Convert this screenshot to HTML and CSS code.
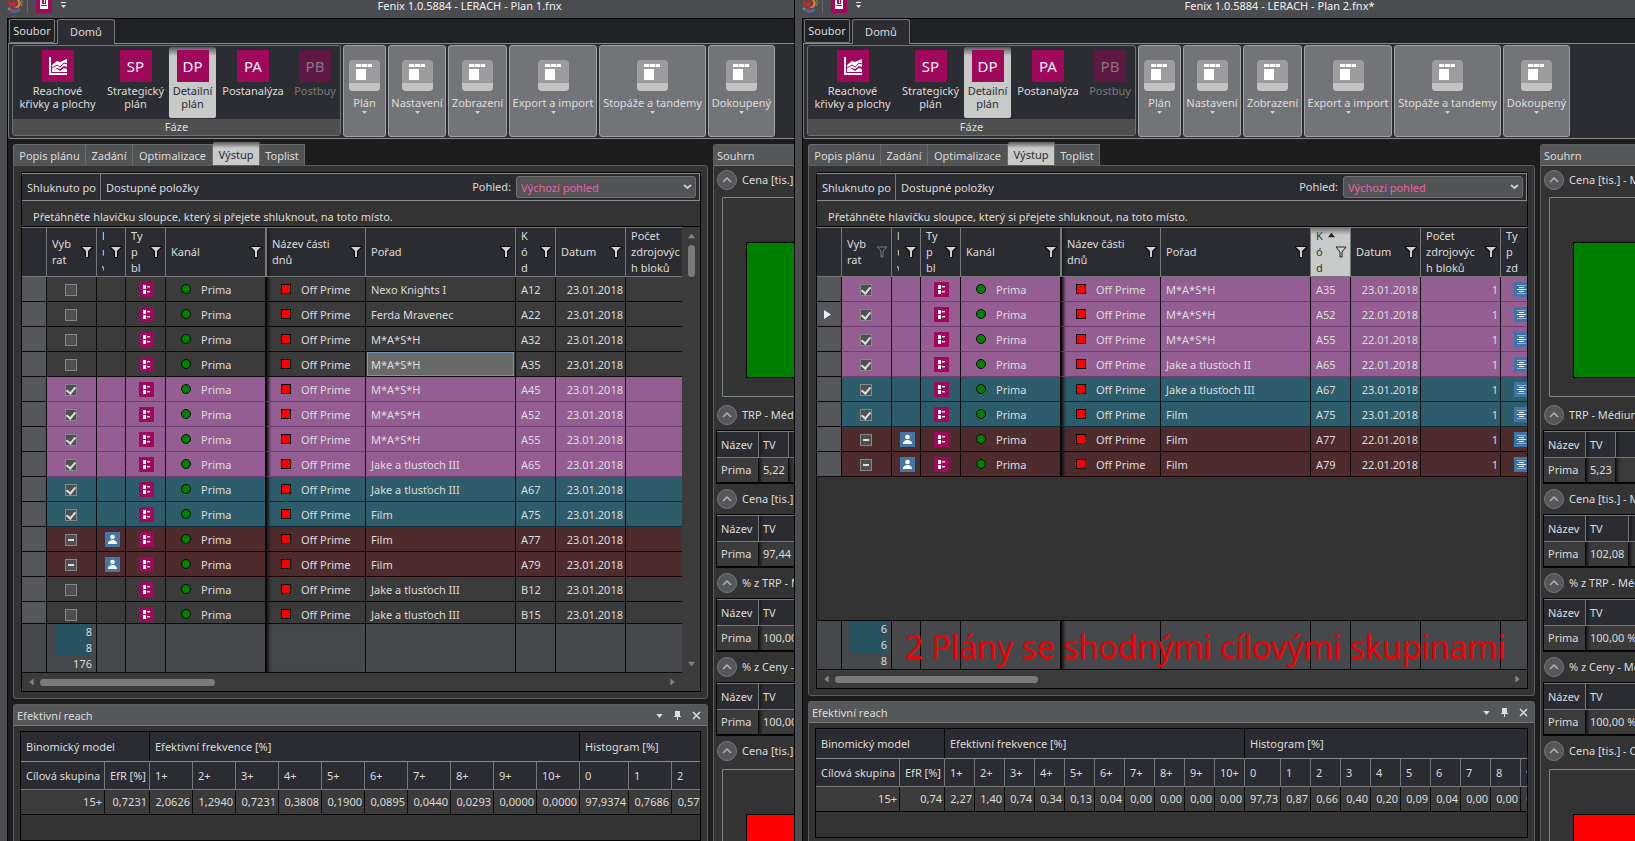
FILE: index.html
```html
<!DOCTYPE html>
<html lang="cs">
<head>
<meta charset="utf-8">
<title>Fenix 1.0.5884 - LERACH</title>
<link rel="stylesheet" href="styles.css">
</head>
<body>
<svg class="defs" aria-hidden="true">
  <symbol id="i-logo" viewBox="0 0 16 16">
    <path d="M1 2 5 7 6 3 9 6 7 10 2 8Z" fill="#d8232a"/>
    <path d="M9 1c4 1 6 5 4 8-1 2-4 3-6 1 3 0 5-2 4-5z" fill="#e8772a"/>
    <path d="M2 8c1 4 7 6 11 2-1 4-5 6-9 4C2 13 1 11 2 8z" fill="#a6403a"/>
    <path d="M4 14c3 2 7 1 9-2" fill="none" stroke="#2e6fc0" stroke-width="2"/>
    <path d="M1 11l2 2" stroke="#2fa0c8" stroke-width="2"/>
    <path d="M13 1c2 2 3 5 1 8" fill="none" stroke="#8a8f4a" stroke-width="1"/>
  </symbol>
  <symbol id="i-save" viewBox="0 0 16 16">
    <rect width="16" height="16" fill="#a0085c"/>
    <path d="M4 3h8v9H4z" fill="#fff"/><path d="M6 3h4v4H6z" fill="#a0085c"/><path d="M8 3h1v3H8z" fill="#fff"/><path d="M5 8h6v1H5z" fill="#a0085c"/>
  </symbol>
  <symbol id="i-more" viewBox="0 0 7 11"><path d="M1 0h5v1H1zM1 3h5L3.500 6z" fill="#e4e4e4"/></symbol>
  <symbol id="i-reach" viewBox="0 0 32 32">
    <path d="M7 7h2v16h16v2H7z" fill="#fff"/>
    <path d="M10 15l5-4 3 1 7-3v8l-3-1-4 3-3-1-5 3z" fill="#fff"/>
    <path d="M10 18l5-3 3 2 4-4 3 1" fill="none" stroke="#a0085c" stroke-width="1"/>
    <path d="M10 20l5-1 3 2 4-3 3 1v3H10z" fill="#fff"/>
  </symbol>
  <symbol id="i-group" viewBox="0 0 31 31">
    <rect width="31" height="31" rx="4" fill="#9c9c9e"/>
    <path d="M0 23h31v4a4 4 0 0 1-4 4H4a4 4 0 0 1-4-4z" fill="#c3c3c1"/>
    <path d="M7 4h16v3H7zM7 9h10v11H7z" fill="#fff"/>
    <path d="M12 4h1v3h-1zM18 4h1v3h-1z" fill="#c6c6c6"/>
  </symbol>
  <symbol id="i-funnel" viewBox="0 0 12 12">
    <path d="M0 0h12v2L8 6v6H4V6L0 2z" fill="#0c0c0c"/><path d="M1 1h10L7 5v6H5V5z" fill="#d2d2d2"/>
  </symbol>
  <symbol id="i-funnel-off" viewBox="0 0 12 12"><path d="M1 1h10L7 5v6H5V5z" fill="none" stroke="#77787a"/></symbol>
  <symbol id="i-funnel-dark" viewBox="0 0 12 12"><path d="M1 1h10L7 6v5H5V6z" fill="#d0d2d1" stroke="#222"/></symbol>
  <symbol id="i-block" viewBox="0 0 15 15">
    <rect width="15" height="15" fill="#a0085c"/>
    <path d="M4 3h3v4H4zM4 8h3v4H4zM8 4h3v1H8zM8 9h3v1H8z" fill="#fff"/>
    <path d="M8 5h3v1H8zM8 10h3v1H8z" fill="#fff" opacity=".35"/>
  </symbol>
  <symbol id="i-person" viewBox="0 0 15 15">
    <rect width="15" height="15" fill="#4676a8"/>
    <circle cx="7.500" cy="5" r="2.300" fill="#fff"/><path d="M3 12c0-3 2-3 3-4h3c1 1 3 1 3 4z" fill="#fff"/>
  </symbol>
  <symbol id="i-lines" viewBox="0 0 15 15">
    <rect width="15" height="15" fill="#3f74a8"/>
    <path d="M3 3h9v1H3zM3 11h9v1H3z" fill="#8fb4d4"/>
    <path d="M5 5h5v1H5zM3 7h9v1H3zM5 9h5v1H5z" fill="#f2f6fa"/>
  </symbol>
  <symbol id="i-row" viewBox="0 0 7 9"><path d="M0 0l7 4.500L0 9z" fill="#e4eefa"/></symbol>
  <symbol id="i-up" viewBox="0 0 20 20">
    <circle cx="10" cy="10" r="9.500" fill="#56575a" stroke="#77787a"/>
    <path d="M6 12l4-4 4 4" fill="none" stroke="#b4b4b4" stroke-width="1.500"/>
  </symbol>
  <symbol id="i-down" viewBox="0 0 8 5"><path d="M0 0h8L4 5z" fill="currentColor"/></symbol>
  <symbol id="i-pin" viewBox="0 0 9 10"><path d="M2 0h5v5h1v1H1V5h1zM4 6h1v3H4z" fill="currentColor"/></symbol>
  <symbol id="i-close" viewBox="0 0 9 9"><path d="M1 1l7 7M8 1L1 8" stroke="currentColor" stroke-width="1.500"/></symbol>
</svg>
<main class="desk" id="desk"></main>
<script src="app.js"></script>
</body>
</html>
```

FILE: styles.css
```css
* { box-sizing: border-box; }

html, body { height: 100%; margin: 0; }

body {
  background: #1d1d1d;
  color: #dcdcdc;
  font: 11px/16px "Noto Sans", "Open Sans", sans-serif;
  overflow: hidden;
}

button, select, input { font: inherit; color: inherit; margin: 0; padding: 0; }
button { background: none; border: 0; }
table { border-collapse: separate; border-spacing: 0; table-layout: fixed; }
th { font-weight: normal; text-align: left; }
svg { display: block; flex: none; }
h1, h2 { margin: 0; font: inherit; }

.defs { position: absolute; width: 0; height: 0; }

.desk { display: grid; grid-template-columns: 795fr 840fr; height: 100vh; }

/* Window frame */
.window {
  display: flex;
  flex-direction: column;
  min-width: 0;
  overflow: hidden;
  background: #4b4c50;
  border-right: 1px solid #050505;
}
.plan-2 { border-right: 0; }
.titlebar {
  display: flex;
  align-items: flex-end;
  gap: 8px;
  height: 18px;
  padding: 0 0 5px 7px;
  overflow: hidden;
}
.titlebar .bar { width: 1px; height: 16px; background: #66676b; margin-left: -4px; }
.titlebar h1 {
  flex: 1;
  margin-right: -70px;
  line-height: 14px;
  text-align: center;
  color: #f0f0f0;
}
.plan-2 .titlebar h1 { margin-right: -54px; }
.client {
  display: flex;
  flex: 1;
  flex-direction: column;
  min-height: 0;
  margin-left: 7px;
  border: solid #050505;
  border-width: 1px 0 0 1px;
  background: #1d1d1d;
}

/* Ribbon */
.ribbon-tabs {
  display: flex;
  gap: 2px;
  height: 25px;
  padding-left: 1px;
  background: #212225;
  border-bottom: 1px solid #8a8b8d;
}
.ribbon-tabs button { border: 1px solid #77787a; border-bottom: 0; border-radius: 3px 3px 0 0; height: 25px; }
.ribbon-tabs .file { width: 46px; height: 24px; border-bottom: 1px solid #77787a; border-radius: 2px; }
.ribbon-tabs .home { width: 58px; background: #2c2d32; }
.ribbon {
  display: flex;
  gap: 2px;
  height: 95px;
  padding: 1px 0 1px 3px;
  background: #2c2d32;
  border-left: 1px solid #77787a;
  border-bottom: 1px solid #8a8b8d;
  border-radius: 0 0 0 3px;
}
.phase { flex: none; border: 1px solid #707174; border-radius: 3px; margin-bottom: 1px; display: flex; flex-direction: column; }
.phase-buttons { display: grid; grid-template-columns: 89px 67px 47px 74px 50px; flex: 1; padding-top: 1px; }
.phase-title { height: 16px; background: #4f4f50; text-align: center; line-height: 16px; }
.phase-button { display: flex; flex-direction: column; align-items: center; gap: 2px; padding-top: 3px; height: 71px; line-height: 13px; white-space: nowrap; }
.phase-button .tile { display: block; width: 32px; height: 32px; background: #a0085c; color: #f0f0f0; font: 15px/32px "Noto Sans", sans-serif; }
.phase-button.on { color: #2c2d32; border-radius: 2px; background: linear-gradient(#555658, #c8cac9 9px, #c8cac9); }
.phase-button:disabled { color: #77787b; }
.phase-button:disabled .tile { background: #5d1843; color: #8b7384; }
.group {
  display: flex;
  flex: none;
  flex-direction: column;
  align-items: center;
  padding-top: 14px;
  background: #737478;
  border: 1px solid #a2a3a5;
  border-radius: 3px;
  white-space: nowrap;
}
.group svg { color: #d0d0d0; }
.group span { margin-top: 4px; }

/* Docked panels */
.dock { display: grid; grid-template-columns: 1fr 81px; gap: 5px; flex: 1; min-height: 0; padding: 3px 0 0 5px; }
.plan-2 .dock { grid-template-columns: 1fr 95px; }
.work { display: flex; flex-direction: column; min-width: 0; min-height: 0; gap: 5px; }
.output { display: flex; flex: 1; flex-direction: column; min-height: 0; }
.tabs { display: flex; align-items: flex-end; flex: none; height: 23px; }
.tabs button { height: 21px; border: 1px solid #6a6b6d; border-width: 1px 1px 0 0; background: #515355; padding-top: 2px; }
.tabs button:first-child { border-left-width: 1px; border-radius: 3px 0 0 0; }
.tabs .on { height: 23px; background: linear-gradient(#6b6c6d, #c8cac9 5px); color: #2c2d32; border-radius: 2px 2px 0 0; }
.tabs button:nth-child(1) { width: 73px; }
.tabs button:nth-child(2) { width: 47px; }
.tabs button:nth-child(3) { width: 80px; }
.tabs button:nth-child(4) { width: 47px; }
.tabs button:nth-child(5) { width: 45px; }
.page { display: flex; flex: 1; flex-direction: column; min-height: 0; padding: 6px 6px 6px 7px; background: #333; border: 1px solid #5b5c5e; border-radius: 0 3px 3px 3px; }
.grid { display: flex; flex: 1; flex-direction: column; min-height: 0; border: 1px solid #050505; }

.groupbar { display: flex; align-items: center; flex: none; height: 28px; background: #2b2c31; border: solid #8a8b8d; border-width: 1px 1px 1px 0; padding-right: 3px; }
.groupbar .by { width: 79px; height: 26px; line-height: 28px; padding-left: 5px; border-right: 1px solid #77787a; white-space: nowrap; overflow: hidden; }
.groupbar .avail { flex: 1; height: 26px; line-height: 28px; padding-left: 5px; }
.groupbar label { display: flex; align-items: center; gap: 5px; }
.groupbar select { width: 180px; height: 22px; padding: 1px 0 0 4px; appearance: none; background: #525355; border: 1px solid #6f7072; border-radius: 3px; color: #e964a8; }
.combo { display: grid; align-items: center; }
.combo select, .combo svg { grid-area: 1 / 1; }
.combo svg { justify-self: end; margin-right: 4px; pointer-events: none; }
.drop { flex: none; height: 26px; padding-left: 11px; line-height: 32px; border-bottom: 1px solid #050505; }

.grid-main { display: flex; flex: 1; min-height: 0; }
.grid-cols { display: flex; flex: 1; flex-direction: column; min-width: 0; overflow: hidden; }
.rows { flex: 1; min-height: 0; overflow: hidden; background: #333; }

.data { width: 0; }
.data th { height: 50px; padding: 0 0 0 5px; background: #2b2c31; border: solid #77787a; border-width: 1px 1px 1px 0; white-space: nowrap; }
.head { display: flex; align-items: center; gap: 2px; height: 48px; }
.head .text { flex: 1; min-width: 0; overflow: hidden; }
.head svg { margin-right: 3px; }
.head.narrow .text { flex: none; width: 2px; margin-right: auto; }
.data th.sorted { background: linear-gradient(#77787a, #c8cac9 7px); color: #333; }
.sorted .head { position: relative; }
.sorted .arrow { position: absolute; top: 4px; left: 12px; width: 7px; height: 6px; margin: 0; color: #222; transform: rotate(180deg); }
.data td { height: 25px; padding: 0; background: #3b3b3b; border: solid #0a0a0a; border-width: 0 1px 1px 0; white-space: nowrap; overflow: hidden; }
.data td.rowhead { background: #55575a; border-color: #0a0a0a; padding-left: 7px; }
.data .pink td:not(.rowhead) { background: #955e93; border-bottom-color: #6f4070; }
.data .teal td:not(.rowhead) { background: #2d5c6b; border-bottom-color: #0b2d3b; }
.data .brown td:not(.rowhead) { background: #4e2c2e; border-bottom-color: #1f0406; }
.data .frozen { border-right-width: 2px; }
.data .after { box-shadow: inset 4px 0 3px -2px #1a1a1a; }
.cell { display: flex; align-items: center; height: 24px; padding-top: 2px; }
.cell.check { padding-left: 18px; }
.cell.owner { padding-left: 8px; }
.cell.type { padding-left: 13px; }
.cell.text { padding-left: 5px; }
.cell.num { justify-content: flex-end; padding-right: 2px; }
.cell.kanal { padding-left: 15px; gap: 10px; }
.cell.part { padding-left: 14px; gap: 10px; }
.cell.type svg, .cell.owner svg { margin-bottom: 1px; }
.cell.picked { margin: 0 1px; padding-left: 3px; background: #676a69; border: 1px solid #7195b8; }
.dot { width: 10px; height: 10px; border: 1px solid #0a0a0a; border-radius: 50%; background: #008000; }
.box { width: 10px; height: 10px; border: 1px solid #0a0a0a; background: #f00; }
.dot, .box { margin-bottom: 2px; }
.tick { display: grid; place-items: center; width: 12px; height: 12px; appearance: none; background: #4e4f51; border: 1px solid #86878a; }
.tick:checked::before { content: ""; width: 4px; height: 7px; margin-bottom: 2px; border: solid #ddd; border-width: 0 2px 2px 0; transform: rotate(40deg); }
.tick:indeterminate::before { content: ""; width: 6px; height: 2px; background: #ddd; }

.sums { flex: none; border-top: 1px solid #0a0a0a; background: #47484b; overflow: hidden; }
.sums td { height: 49px; background: #47484b; vertical-align: top; }
.sum { margin: 0 4px 0 8px; text-align: right; }
.sum span { display: block; }
.sum span:nth-child(-n+2) { background: #275361; }

.vbar { display: flex; flex-direction: column; align-items: center; justify-content: space-between; width: 18px; padding: 6px 0; background: #3b3b3b; color: #858585; }
.vbar .up { transform: rotate(180deg); }
.vbar .thumb { width: 7px; height: 32px; border-radius: 4px; background: #7b7b7b; margin: 6px 0 auto; }
.hbar { display: flex; align-items: center; flex: none; height: 18px; padding: 0 24px 0 6px; background: #3b3b3b; color: #858585; }
.plan-2 .hbar { padding-right: 6px; }
.hbar .left { transform: rotate(90deg); }
.hbar .right { transform: rotate(-90deg); margin-left: auto; }
.hbar .thumb { width: 175px; height: 7px; border-radius: 4px; background: #7b7b7b; margin-left: 5px; }
.plan-2 .hbar .thumb { width: 203px; }

/* Effective reach */
.reach { flex: none; height: 137px; background: #333; border: 1px solid #5b5c5e; border-bottom: 0; border-radius: 3px 3px 0 0; }
.plan-2 .reach { height: 140px; }
.bar-title { display: flex; align-items: center; gap: 10px; height: 21px; padding: 1px 6px 0 3px; background: #555759; border-bottom: 1px solid #77787a; }
.bar-title h2 { flex: 1; }
.bar-title button { color: #dcdcdc; }
.reach-view { margin: 5px 6px 0 6px; height: 110px; border: 1px solid #050505; overflow: hidden; }
.freq { width: 0; white-space: nowrap; border-bottom: 1px solid #050505; }
.freq th { height: 28px; padding: 0 0 0 5px; background: #2b2c31; border: solid #77787a; border-width: 0 1px 1px 0; }
.freq .top th { height: 30px; border-right-color: #0a0a0a; border-bottom-color: #8a8b8d; }
.freq td { height: 24px; padding: 0 2px 0 0; background: #3b3b3b; border-right: 1px solid #0a0a0a; text-align: right; }

/* Summary */
.summary { min-width: 0; min-height: 0; margin-top: 2px; background: #333; border: 1px solid #5b5c5e; border-right: 0; border-bottom: 0; border-radius: 3px 0 0 0; overflow: hidden; white-space: nowrap; }
.summary > h2 { height: 21px; padding-left: 3px; line-height: 22px; background: #555759; border-bottom: 1px solid #77787a; }
.expander { display: flex; align-items: center; gap: 5px; height: 30px; padding-left: 3px; }
.expander h2 { flex: none; }
.chart { height: 200px; margin: 3px 0 3px 8px; padding: 44px 0 0 23px; border: 1px solid #7d8689; border-right: 0; border-radius: 2px 0 0 2px; }
.summary > h2 + .expander { height: 28px; }
.shade { height: 136px; border: 1px solid #050505; border-right: 0; background: #008000; }
.shade.red { background: #f00; }
.mini { width: 0; margin-left: 2px; border: solid #050505; border-width: 1px 0 2px 1px; }
.mini th { height: 27px; padding: 0 0 0 4px; background: #2b2c31; border: solid #77787a; border-width: 1px 1px 1px 0; }
.mini td { height: 24px; padding: 0 0 0 4px; background: #3b3b3b; border-right: 1px solid #0a0a0a; }
.mini td + td, .mini th + th { box-shadow: inset 4px 0 3px -2px #1a1a1a; }

/* Caption drawn over the second window */
.caption { position: absolute; left: 905px; top: 625px; margin: 0; font-size: 32px; line-height: 44px; color: #f00000; white-space: nowrap; }
```

FILE: app.js
```js
const icon = (name, w, h = w, cls = "") =>
  `<svg class="${cls}" width="${w}" height="${h}" aria-hidden="true"><use href="#i-${name}"/></svg>`;

const groups = [["Plán", 43], ["Nastavení", 58], ["Zobrazení", 59], ["Export a import", 88], ["Stopáže a tandemy", 107], ["Dokoupený", 67]];

const plans = [
  {
    cls: "plan-1",
    title: "Fenix 1.0.5884 - LERACH - Plan 1.fnx",
    rows: [
      ["", "Nexo Knights I", "A12"], ["", "Ferda Mravenec", "A22"], ["", "M*A*S*H", "A32"], ["", "M*A*S*H", "A35", "picked"],
      ["pink", "M*A*S*H", "A45"], ["pink", "M*A*S*H", "A52"], ["pink", "M*A*S*H", "A55"], ["pink", "Jake a tlusťoch III", "A65"],
      ["teal", "Jake a tlusťoch III", "A67"], ["teal", "Film", "A75"], ["brown", "Film", "A77"], ["brown", "Film", "A79"],
      ["", "Jake a tlusťoch III", "B12"], ["", "Jake a tlusťoch III", "B15"],
    ],
    days: () => "23.01.2018",
    count: "",
    sums: [8, 8, 176],
    efr: "0,7231",
    freq: ["2,0626", "1,2940", "0,7231", "0,3808", "0,1900", "0,0895", "0,0440", "0,0293", "0,0000", "0,0000"],
    hist: ["97,9374", "0,7686", "0,5705"],
    widths: [43, 49, 43],
    panels: [["TRP - Médium", "5,22", 30], ["Cena [tis.] - Médium", "97,44", 36], ["% z TRP - Médium", "100,00 %", 60], ["% z Ceny - Médium", "100,00 %", 60]],
  },
  {
    cls: "plan-2",
    title: "Fenix 1.0.5884 - LERACH - Plan 2.fnx*",
    rows: [
      ["pink", "M*A*S*H", "A35"], ["pink", "M*A*S*H", "A52"], ["pink", "M*A*S*H", "A55"], ["pink", "Jake a tlusťoch II", "A65"],
      ["teal", "Jake a tlusťoch III", "A67"], ["teal", "Film", "A75"], ["brown", "Film", "A77"], ["brown", "Film", "A79"],
    ],
    days: i => ([0, 4, 5].includes(i) ? "23.01.2018" : "22.01.2018"),
    count: "1",
    sums: [6, 6, 8],
    efr: "0,74",
    freq: ["2,27", "1,40", "0,74", "0,34", "0,13", "0,04", "0,00", "0,00", "0,00", "0,00"],
    hist: ["97,73", "0,87", "0,66", "0,40", "0,20", "0,09", "0,04", "0,00", "0,00", "0,00"],
    widths: [30, 36, 30],
    panels: [["TRP - Médium", "5,23", 30], ["Cena [tis.] - Médium", "102,08", 43], ["% z TRP - Médium", "100,00 %", 60], ["% z Ceny - Médium", "100,00 %", 60]],
  },
];

const cols = ws => `<colgroup>${ws.map(w => `<col style="width:${w}px">`).join("")}</colgroup>`;

function ribbon() {
  return `
  <nav class="ribbon-tabs"><button class="file">Soubor</button><button class="home">Domů</button></nav>
  <div class="ribbon">
    <section class="phase">
      <div class="phase-buttons">
        <button class="phase-button"><span class="tile">${icon("reach", 32)}</span><span>Reachové<br>křivky a plochy</span></button>
        <button class="phase-button"><span class="tile">SP</span><span>Strategický<br>plán</span></button>
        <button class="phase-button on"><span class="tile">DP</span><span>Detailní<br>plán</span></button>
        <button class="phase-button"><span class="tile">PA</span><span>Postanalýza</span></button>
        <button class="phase-button" disabled><span class="tile">PB</span><span>Postbuy</span></button>
      </div>
      <div class="phase-title">Fáze</div>
    </section>
    ${groups.map(([name, w]) => `<button class="group" style="width:${w}px">${icon("group", 31)}<span>${name}</span>${icon("down", 5, 3)}</button>`).join("")}
  </div>`;
}

function grid(p, second) {
  const widths = [25, 50, 29, 40, 101, 99, 150, 40, 70, 80, 60];
  const head = (text, f = "funnel", cls = "") => `<div class="head ${cls}"><span class="text">${text}</span>${f ? icon(f, 12) : ""}</div>`;
  const heads = [
    "<th></th>",
    `<th>${head("Vyb<br>rat", second ? "funnel-off" : "funnel")}</th>`,
    `<th>${head("l<br>u<br>v", "funnel", "narrow")}</th>`,
    `<th>${head("Ty<br>p<br>bl")}</th>`,
    `<th class="frozen">${head("Kanál")}</th>`,
    `<th class="after">${head("Název části<br>dnů")}</th>`,
    `<th>${head("Pořad")}</th>`,
    second
      ? `<th class="sorted"><div class="head"><span class="text">K<br>ó<br>d</span>${icon("down", 7, 6, "arrow")}${icon("funnel-dark", 12)}</div></th>`
      : `<th>${head("K<br>ó<br>d")}</th>`,
    `<th>${head("Datum")}</th>`,
    `<th>${head("Počet<br>zdrojovýc<br>h bloků")}</th>`,
    `<th>${head("Ty<br>p<br>zd", "")}</th>`,
  ];
  const rows = p.rows.map(([tone, show, code, picked = ""], i) => `
    <tr class="${tone}">
      <td class="rowhead">${second && i === 1 ? icon("row", 7, 9) : ""}</td>
      <td><div class="cell check"><input class="tick" type="checkbox" aria-label="Vybrat ${code}" ${tone === "pink" || tone === "teal" ? "checked" : ""} ${tone === "brown" ? "data-partial" : ""}></div></td>
      <td><div class="cell owner">${tone === "brown" ? icon("person", 15) : ""}</div></td>
      <td><div class="cell type">${icon("block", 15)}</div></td>
      <td class="frozen"><div class="cell kanal"><i class="dot"></i>Prima</div></td>
      <td class="after"><div class="cell part"><i class="box"></i>Off Prime</div></td>
      <td><div class="cell text ${picked}">${show}</div></td>
      <td><div class="cell text">${code}</div></td>
      <td><div class="cell num">${p.days(i)}</div></td>
      <td><div class="cell num">${p.count}</div></td>
      <td><div class="cell type">${second ? icon("lines", 15) : ""}</div></td>
    </tr>`).join("");
  return `
  <div class="grid">
    <div class="groupbar">
      <span class="by">Shluknuto po</span><span class="avail">Dostupné položky</span>
      <label>Pohled:<span class="combo"><select><option>Výchozí pohled</option></select>
        <svg width="9" height="6" viewBox="0 0 9 6"><path d="M1 1l3.500 3L8 1" fill="none" stroke="#ccc" stroke-width="2"/></svg></span></label>
    </div>
    <div class="drop">Přetáhněte hlavičku sloupce, který si přejete shluknout, na toto místo.</div>
    <div class="grid-main">
      <div class="grid-cols">
        <div class="rows"><table class="data">${cols(widths)}<thead><tr>${heads.join("")}</tr></thead><tbody>${rows}</tbody></table></div>
        <div class="sums"><table class="data">${cols(widths)}<tbody><tr><td></td><td><div class="sum">${p.sums.map(n => `<span>${n}</span>`).join("")}</div></td><td></td><td></td><td class="frozen"></td><td class="after"></td><td></td><td></td><td></td><td></td><td></td></tr></tbody></table></div>
      </div>
      ${second ? "" : `<div class="vbar">${icon("down", 7, 6, "up")}<span class="thumb"></span>${icon("down", 7, 6)}</div>`}
    </div>
    <div class="hbar">${icon("down", 7, 6, "left")}<span class="thumb"></span>${icon("down", 7, 6, "right")}</div>
  </div>`;
}

function reach(p) {
  const [f, h0, h] = p.widths;
  const widths = [84, 45, ...p.freq.map(() => f), ...p.hist.map((_, i) => (i ? h : h0))];
  return `
  <section class="reach">
    <div class="bar-title"><h2>Efektivní reach</h2>
      <button aria-label="Nabídka">${icon("down", 7, 4)}</button><button aria-label="Připnout">${icon("pin", 9, 10)}</button><button aria-label="Zavřít">${icon("close", 9)}</button></div>
    <div class="reach-view"><table class="freq">${cols(widths)}
      <thead><tr class="top"><th colspan="2">Binomický model</th><th colspan="10">Efektivní frekvence [%]</th><th colspan="${p.hist.length}">Histogram [%]</th></tr>
      <tr><th>Cílová skupina</th><th>EfR [%]</th>${p.freq.map((_, i) => `<th>${i + 1}+</th>`).join("")}${p.hist.map((_, i) => `<th>${i}</th>`).join("")}</tr></thead>
      <tbody><tr><td>15+</td><td>${p.efr}</td>${[...p.freq, ...p.hist].map(v => `<td>${v}</td>`).join("")}</tr></tbody></table></div>
  </section>`;
}

const expander = text => `<div class="expander"><button aria-label="Sbalit ${text}">${icon("up", 20)}</button><h2>${text}</h2></div>`;

function summary(p) {
  return `
  <aside class="summary"><h2>Souhrn</h2>
    ${expander("Cena [tis.] - Médium")}<div class="chart"><div class="shade"></div></div>
    ${p.panels.map(([name, value, w]) => `${expander(name)}<table class="mini">${cols([42, w, 60])}<thead><tr><th>Název</th><th>TV</th><th></th></tr></thead><tbody><tr><td>Prima</td><td>${value}</td><td></td></tr></tbody></table>`).join("")}
    ${expander("Cena [tis.] - Cílová skupina")}<div class="chart"><div class="shade red"></div></div>
  </aside>`;
}

document.getElementById("desk").innerHTML = plans.map((p, i) => `
  <section class="window ${p.cls}">
    <header class="titlebar">${icon("logo", 16)}<span class="bar"></span><button aria-label="Uložit">${icon("save", 16)}</button><button aria-label="Více">${icon("more", 7, 11)}</button><h1>${p.title}</h1></header>
    <div class="client">${ribbon()}
      <div class="dock">
        <div class="work">
          <section class="output">
            <nav class="tabs"><button>Popis plánu</button><button>Zadání</button><button>Optimalizace</button><button class="on">Výstup</button><button>Toplist</button></nav>
            <div class="page">${grid(p, i === 1)}</div>
          </section>
          ${reach(p)}
        </div>
        ${summary(p)}
      </div>
    </div>
  </section>`).join("") + '<p class="caption">2 Plány se shodnými cílovými skupinami</p>';

document.querySelectorAll("[data-partial]").forEach(box => { box.indeterminate = true; });
```
